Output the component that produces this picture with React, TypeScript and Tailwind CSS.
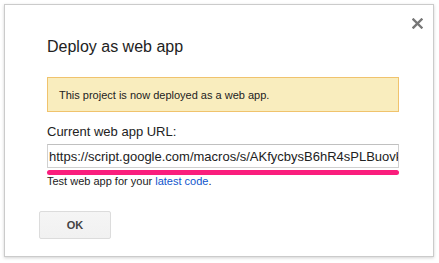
const deployUrl = "https://script.google.com/macros/s/AKfycbysB6hR4sPLBuovkY3rJ/exec"

function CloseIcon() {
  return (
    <svg width="11" height="11" viewBox="0 0 11 11" className="block">
      <path d="M1.5 1.5 L9.5 9.5 M9.5 1.5 L1.5 9.5" stroke="#777" strokeWidth="2.4" strokeLinecap="square" />
    </svg>
  )
}

export default function App() {
  return (
    <div className="w-[439px] h-[263px] bg-white p-[4px] font-['Liberation_Sans',Arial,sans-serif]">
      <div className="relative w-[430px] h-[253px] bg-white border border-[#cbcbcb] shadow-[0_1px_3px_rgba(0,0,0,0.18)] pl-[42px] pr-[34px] pt-[32px]">
        <button className="absolute top-[12px] right-[9px] p-[1px]">
          <CloseIcon />
        </button>

        <h1 className="text-[16px] leading-[20px] text-[#222] font-normal">Deploy as web app</h1>

        <div className="mt-[20px] h-[35px] flex items-center bg-[#f9edbe] border border-[#f0c36d] pl-[11px] pt-[1px]">
          <p className="text-[11px] leading-[13px] text-[#222]">This project is now deployed as a web app.</p>
        </div>

        <label className="block mt-[12px] text-[13px] leading-[16px] text-[#222]">Current web app URL:</label>

        <div className="mt-[4px] h-[24px] border border-[#d0d0d0] border-t-[#c0c0c0] bg-white pl-[1px] pt-[2px] overflow-hidden whitespace-nowrap text-[13px] leading-[20px] text-[#222]">
          {deployUrl}
        </div>
        <div className="mt-[2px] h-[5px] rounded-full bg-[#fa1e7d]" />

        <p className="text-[11px] leading-[13px] text-[#222]">
          Test web app for your <a className="text-[#15c] cursor-pointer">latest code</a>.
        </p>

        <button className="mt-[23px] -ml-[8px] w-[72px] h-[28px] rounded-[2px] border border-[#dcdcdc] bg-gradient-to-b from-[#f5f5f5] to-[#f1f1f1] text-[11px] font-bold text-[#444]">
          OK
        </button>
      </div>
    </div>
  )
}
